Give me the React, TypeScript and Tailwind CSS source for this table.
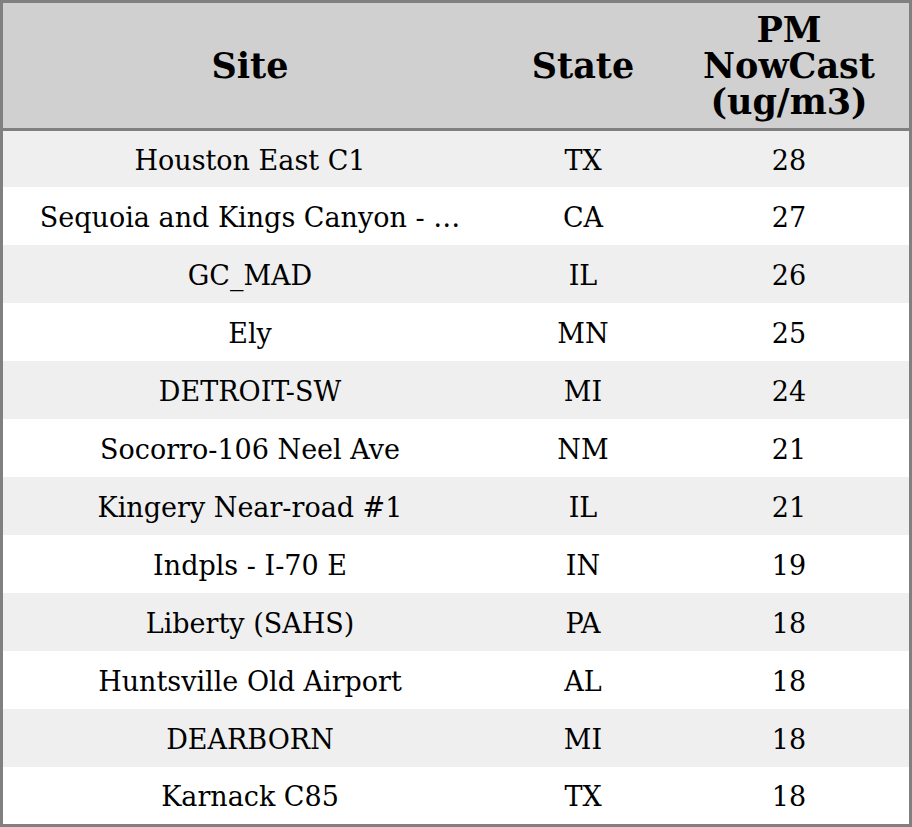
const rows = [
  { site: "Houston East C1", state: "TX", pm: 28 },
  { site: "Sequoia and Kings Canyon - …", state: "CA", pm: 27 },
  { site: "GC_MAD", state: "IL", pm: 26 },
  { site: "Ely", state: "MN", pm: 25 },
  { site: "DETROIT-SW", state: "MI", pm: 24 },
  { site: "Socorro-106 Neel Ave", state: "NM", pm: 21 },
  { site: "Kingery Near-road #1", state: "IL", pm: 21 },
  { site: "Indpls - I-70 E", state: "IN", pm: 19 },
  { site: "Liberty (SAHS)", state: "PA", pm: 18 },
  { site: "Huntsville Old Airport", state: "AL", pm: 18 },
  { site: "DEARBORN", state: "MI", pm: 18 },
  { site: "Karnack C85", state: "TX", pm: 18 },
];

export default function App() {
  return (
    <div className="h-[827px] w-[912px] border-[3px] border-[#808080] bg-white font-['DejaVu_Serif',serif] text-black">
      <div className="grid h-[128px] grid-cols-[494px_172px_240px] items-center border-b-[3px] border-[#808080] bg-[#d0d0d0] text-center text-[35px] font-bold leading-[36px]">
        <div>Site</div>
        <div>State</div>
        <div>
          PM
          <br />
          NowCast
          <br />
          (ug/m3)
        </div>
      </div>
      {rows.map((row, i) => (
        <div
          key={row.site}
          className={`grid grid-cols-[494px_172px_240px] items-center pt-[4px] text-center text-[27px] ${
            i === 0 ? "h-[56px]" : i === rows.length - 1 ? "h-[57px]" : "h-[58px]"
          } ${i % 2 === 0 ? "bg-[#efefef]" : "bg-white"}`}
        >
          <div className="whitespace-nowrap">{row.site}</div>
          <div>{row.state}</div>
          <div>{row.pm}</div>
        </div>
      ))}
    </div>
  );
}
